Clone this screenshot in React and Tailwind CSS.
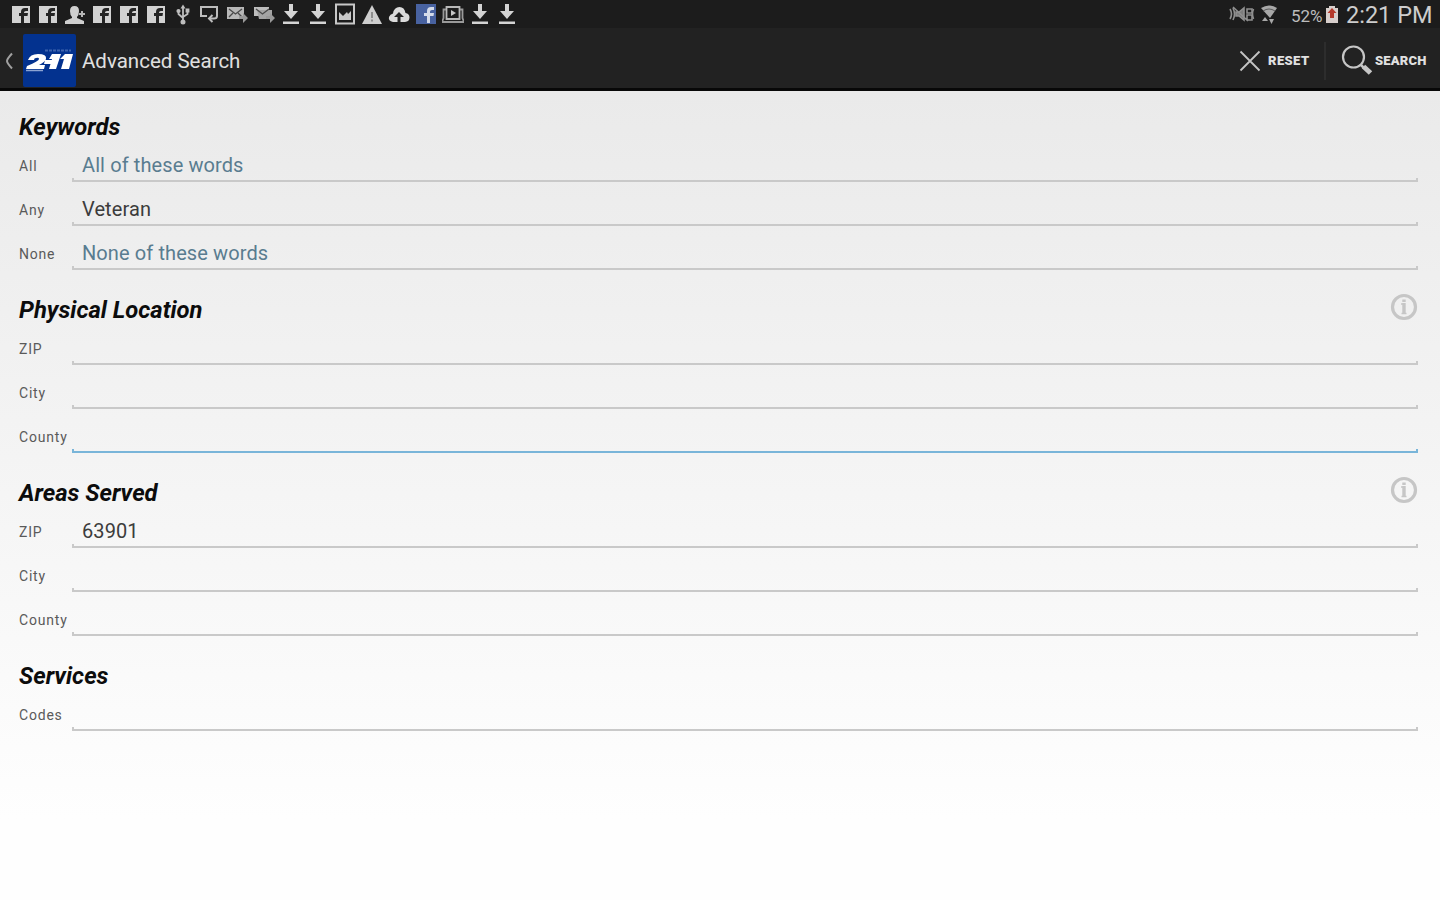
const sections = [
  {
    title: 'Keywords',
    rows: [
      { label: 'All', hint: 'All of these words' },
      { label: 'Any', value: 'Veteran' },
      { label: 'None', hint: 'None of these words' },
    ],
  },
  {
    title: 'Physical Location',
    info: true,
    rows: [{ label: 'ZIP' }, { label: 'City' }, { label: 'County', focused: true }],
  },
  {
    title: 'Areas Served',
    info: true,
    rows: [{ label: 'ZIP', value: '63901' }, { label: 'City' }, { label: 'County' }],
  },
  { title: 'Services', rows: [{ label: 'Codes' }] },
]

const notifications = [
  'facebook', 'facebook', 'contact', 'facebook', 'facebook', 'facebook', 'usb', 'cast', 'mail', 'mailStack',
  'download', 'download', 'picture', 'warning', 'cloud', 'facebookBlue', 'video', 'download', 'download',
]

const glyphs = {
  facebook: (
    <>
      <path d="M2 3h18v17H2z" fill="#d2d2d2" />
      <path d="M11 20v-7H9v-3h2V9q0-4 4-4h3v3h-2q-2 0-2 1.500V10h4l-.5 3H14v7z" fill="#242424" />
    </>
  ),
  facebookBlue: (
    <>
      <path d="M1 1h20v20H1z" fill="#4862a0" />
      <path d="M12 20v-7H9v-3h3V8q0-4 4-4h3v3h-2q-2 0-2 1.500V10h4l-.5 3H15v7z" fill="#d4dbea" />
    </>
  ),
  contact: (
    <>
      <path d="M6 8q0-5 4.500-5T15 8q0 4-2 6v1l7 3v3H1v-3l7-3v-1q-2-2-2-6z" fill="#cfcfcf" />
      <path d="M15 11h6M18 8v6" stroke="#b5b5b5" strokeWidth="2" />
    </>
  ),
  usb: (
    <g fill="none" stroke="#bdbdbd" strokeWidth="1.800">
      <path d="M11 4v14M6.500 8v3l4.500 4M15.500 8v3L11 14" />
      <path d="M8.500 5.500 11 1.500l2.500 4z" fill="#bdbdbd" stroke="none" />
      <circle cx="6.500" cy="8" r="1.200" fill="#bdbdbd" />
      <path d="M14.500 6.500h2v2h-2z" />
      <circle cx="11" cy="19" r="1.600" fill="#bdbdbd" />
    </g>
  ),
  cast: (
    <g fill="none" stroke="#bdbdbd" strokeWidth="2">
      <path d="M8 13H2V4h16v7" />
      <path d="M18 10v3q0 2.500-3 2.500h-4" />
      <path d="m13.500 12-3.500 3.500 3.500 3.500" />
    </g>
  ),
  mail: (
    <>
      <path d="M1 4h17v12H1z" fill="#b8b8b8" />
      <path d="m3 6 6.500 5L16 6M3 14l4-4M16 14l-4-4" fill="none" stroke="#4a4a4a" strokeWidth="1.300" />
      <path d="M13 13h4v-3l5 5-5 5v-4h-4z" fill="#999" />
    </>
  ),
  mailStack: (
    <>
      <path d="M1 4h15v9H1z" fill="#bdbdbd" />
      <path d="M4 7h15v9H6z" fill="#a4a4a4" />
      <path d="m3 6 6.500 5L16 6" fill="none" stroke="#4a4a4a" strokeWidth="1.300" />
      <path d="M13 13h4v-3l5 5-5 5v-4h-4z" fill="#999" />
    </>
  ),
  download: (
    <path d="M9 1h4v7h5l-7 8-7-8h5zM3 18.500h16V21H3z" fill="#d4d4d4" />
  ),
  picture: (
    <>
      <path d="M2 1.500h18v19H2z" fill="none" stroke="#c8c8c8" strokeWidth="2" />
      <path d="M5 17V9l4 4 4-4 1 2 3-3v9z" fill="#c8c8c8" />
    </>
  ),
  warning: (
    <>
      <path d="M11 2 21 21H1z" fill="#cecece" />
      <path d="M11 9v6M11 16.500v2" stroke="#888" strokeWidth="1.800" />
    </>
  ),
  cloud: (
    <>
      <path d="M5 19q-5-1-4-5 1-3 4-3.500Q6 4 11.500 4q5 0 6 6 4 .5 4 4.500 0 4-4.500 4.500z" fill="#dcdcdc" />
      <path d="m11 9 5 5h-3.500v5h-3v-5H6z" fill="#242424" />
    </>
  ),
  video: (
    <g fill="none" stroke="#b8b8b8" strokeWidth="1.800">
      <path d="M4.500 4h13v12h-13z" />
      <path d="M4 6.500H1.500V15L0 19h22l-1.500-4V6.500H18" stroke="#9a9a9a" />
      <path d="m9 7 5 3-5 3z" fill="#c8c8c8" stroke="none" />
    </g>
  ),
}

function StatusBar() {
  return (
    <div className="flex h-[28px] items-center justify-between bg-[#1c1c1c] pl-[10px] pr-[7px]">
      <div className="flex">
        {notifications.map((name, i) => (
          <svg key={i} className="mr-[5px] h-[22px] w-[22px]" viewBox="0 0 22 22">
            {glyphs[name]}
          </svg>
        ))}
      </div>
      <div className="flex items-center text-[#bcbcbc]">
        <svg className="mr-[5px] h-[22px] w-[26px]" viewBox="0 0 26 22" fill="none" stroke="#8f8f8f" strokeWidth="1.600">
          <path d="M1 6q3 5 0 10M4 5q3 6 0 12M24.500 6q-2 5 0 10" />
          <path d="M7 9h3l5-4v12l-5-4H7z" fill="#7c7c7c" />
          <path d="m4 4 15 14M18 6h5v4h-5zM18 12h5v5h-5z" />
        </svg>
        <svg className="mr-[13px] h-[22px] w-[18px]" viewBox="0 0 18 22">
          <path d="M1 5q8-5 16 0l-7 10z" fill="#a8a8a8" />
          <path d="M3 8q6-4 12 0" fill="none" stroke="#5a5a5a" />
          <path d="m5 14 3 4H2zM9 16h5l-2.500 5z" fill="#a8a8a8" />
        </svg>
        <span className="w-[34px] pt-[3px] text-[17px] leading-[22px]">52%</span>
        <svg className="mr-[7px] h-[22px] w-[14px]" viewBox="0 0 14 22">
          <path d="M4 3h6v2h3v15H1V5h3z" fill="#d8cfcc" />
          <path d="M7 5 2.500 10H5v5h4v-5h2.500z" fill="#b5392b" />
        </svg>
        <span className="w-[87px] whitespace-nowrap pt-[1px] text-[23.500px] leading-[28px] text-[#cdcdcd]">2:21 PM</span>
      </div>
    </div>
  )
}

function Logo() {
  return (
    <div className="h-[53px] w-[53px] rounded-[2px] bg-[#03328f]">
      <svg className="h-[53px] w-[53px]" viewBox="0 0 53 53">
        <path d="M22 16.500h26" stroke="#3d62ad" strokeWidth="2" strokeDasharray="3 1" />
        <path
          d="M5 26q2-6 10-6 9 0 8 5-1 3-7 6h6l-1 4H3l1-3q12-5 12-7 0-2-3-1-2 0-2 2z"
          fill="#fff"
        />
        <path d="M22 26h8l-1 4h-8z" fill="#fff" />
        <path d="M29 20h9l-5 15h-7l3-10h-3zM42 20h8l-4 15h-8l3-10h-4z" fill="#fff" />
        <path d="M3 36.500h17" stroke="#8ba3d2" strokeWidth="1.500" />
      </svg>
    </div>
  )
}

function ActionBar() {
  return (
    <header className="flex h-[63px] items-center border-b-[3px] border-[#080808] bg-[#222] pl-[4px] pr-[12px] pt-[5px]">
      <svg className="mr-[9px] h-[18px] w-[10px]" viewBox="0 0 10 18" fill="none" stroke="#a0a0a0" strokeWidth="2">
        <path d="M8 1.500Q3 7 3 9t5 7.500" />
      </svg>
      <Logo />
      <h1 className="ml-[6px] pt-[1px] text-[20.500px] text-[#e0e0e0]">Advanced Search</h1>
      <div className="ml-auto flex items-center text-[13px] font-black text-[#e0e0e0]">
        <svg className="mr-[7px] h-[22px] w-[22px]" viewBox="0 0 22 22" stroke="#c4c4c4" strokeWidth="1.800">
          <path d="m1.500 1.500 19 19M20.500 1.500l-19 19" />
        </svg>
        <span className="w-[42px] tracking-[0.400px]">RESET</span>
        <div className="ml-[14px] mr-[15px] h-[38px] w-[2px] bg-[#2d2d2d]" />
        <svg className="mr-[2px] h-[32px] w-[32px]" viewBox="0 0 32 32" fill="none" stroke="#c6c6c6">
          <circle cx="12.500" cy="12" r="10.500" strokeWidth="2.200" />
          <path d="m20 20 3 3" strokeWidth="2.500" />
          <path d="m22.500 21.500 7 6.500" strokeWidth="5" />
        </svg>
        <span className="w-[53px] tracking-[0.200px]">SEARCH</span>
      </div>
    </header>
  )
}

function InfoIcon() {
  return (
    <svg className="h-[28px] w-[28px]" viewBox="0 0 28 28" fill="none" stroke="#c6c6c6">
      <circle cx="14" cy="14" r="11.500" strokeWidth="3.200" />
      <path d="M14 6.500v2.500M14 10V21" strokeWidth="3.400" />
      <path d="M11 11h3M11.500 20.500h5" strokeWidth="1.400" />
    </svg>
  )
}

function Field({ label, hint, value, focused }) {
  const line = focused ? 'border-[#79b5d9]' : 'border-[#c9c9c9]'
  return (
    <div className="flex h-[44px] items-end">
      <span className="w-[53px] shrink-0 whitespace-nowrap pb-[6px] text-[14px] leading-[20px] tracking-[0.800px] text-[#5a5a5a]">
        {label}
      </span>
      <div className="flex flex-1 flex-col">
        <div className="h-[27px] pl-[10px] text-[20px] leading-[28px] tracking-[0.100px]">
          {hint && <span className="text-[#597c90]">{hint}</span>}
          {value && <span className="text-[#3c3c3c]">{value}</span>}
        </div>
        <div className={`h-[4px] border-x-2 border-b-2 ${line}`} />
      </div>
    </div>
  )
}

function Section({ title, info, rows }) {
  return (
    <section className="mb-[16px]">
      <div className="flex h-[35px] items-start justify-between">
        <h2 className="pt-[10px] text-[23.800px] font-bold italic leading-[28px] text-[#0c0c0c]">{title}</h2>
        {info && (
          <div className="pt-[7px]">
            <InfoIcon />
          </div>
        )}
      </div>
      {rows.map((row) => (
        <Field key={row.label} {...row} />
      ))}
    </section>
  )
}

export default function App() {
  return (
    <div className="flex h-[900px] w-[1440px] flex-col overflow-hidden font-['Roboto',sans-serif]">
      <StatusBar />
      <ActionBar />
      <main className="flex-1 bg-linear-to-b from-[#eaeaea] to-[#fefefe] to-90% pl-[19px] pr-[22px] pt-[12px]">
        {sections.map((section) => (
          <Section key={section.title} {...section} />
        ))}
      </main>
    </div>
  )
}
